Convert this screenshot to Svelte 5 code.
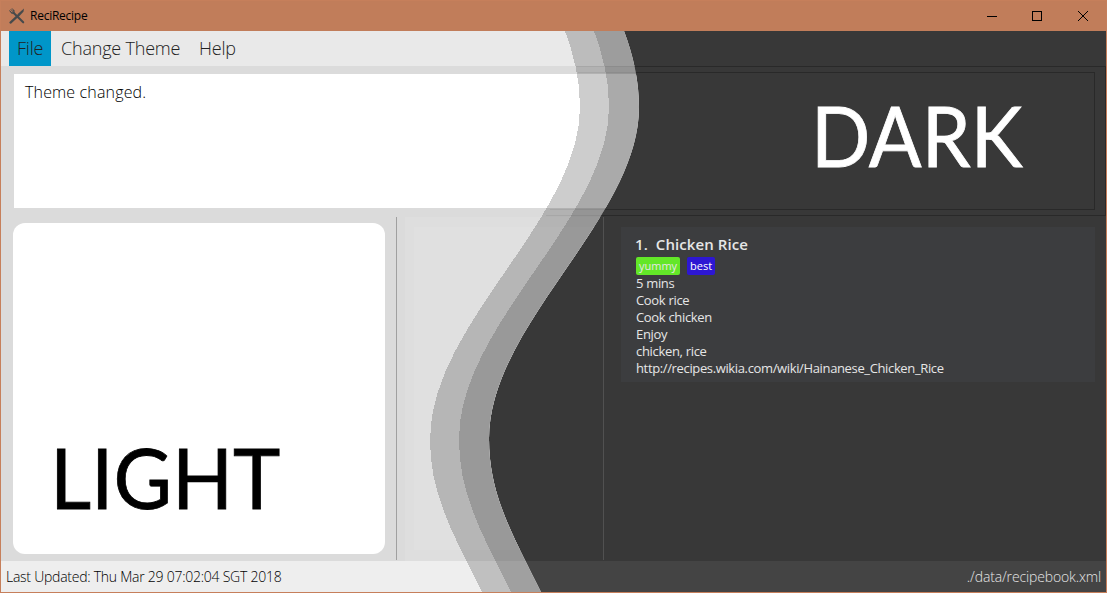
<script>
  const menus = ['File', 'Change Theme', 'Help'];
  const recipe = {
    title: '1.  Chicken Rice',
    tags: [
      { name: 'yummy', kind: 'green' },
      { name: 'best', kind: 'blue' }
    ],
    lines: ['5 mins', 'Cook rice', 'Cook chicken', 'Enjoy', 'chicken, rice'],
    url: 'http://recipes.wikia.com/wiki/Hainanese_Chicken_Rice'
  };
  // Wave outline running from the top of the content area to its bottom
  const wave = (dx) =>
    `M${623 + dx} 0C${632 + dx} 24 ${638 + dx} 49 ${638 + dx} 76C${638 + dx} 188 ${488 + dx} 293 ${488 + dx} 408C${488 + dx} 463 ${510 + dx} 501 ${540 + dx} 561`;
  const edge = `${wave(0)}L0 561L0 0Z`;
  const shade = (dx) => `${wave(dx)}L1105 561L1105 0Z`;
</script>

<div class="window">
  <header class="titlebar">
    <svg class="logo" width="16" height="16" viewBox="0 0 16 16">
      <path d="M15 .6L9.6 5.2L7.8 8L10 8.4L14.4 3.8Z" fill="#474a4b" />
      <path d="M9 7.6L1.5 14.6" stroke="#474a4b" stroke-width="2.2" stroke-linecap="round" />
      <path d="M.5 2.3L3 5M1.7 1.2L4.2 3.8M3 .4L5.4 3M1 3C2.2 5.8 3.6 5.8 5 5.2C5.6 4.4 5.2 3.2 4.2 2" fill="none" stroke="#474a4b" stroke-width="1" />
      <path d="M4.2 4.4L14.2 14.3" stroke="#474a4b" stroke-width="2.1" stroke-linecap="round" />
    </svg>
    <span class="app-name">ReciRecipe</span>
    <svg class="controls" width="106" height="12" viewBox="0 0 106 12" fill="none" stroke="#000">
      <path d="M1 6.5H11M46.5 1.5H55.5V10.5H46.5Z" shape-rendering="crispEdges" />
      <path d="M92 1L102 11M102 1L92 11" />
    </svg>
  </header>

  <main class="stage">
    <section class="layer dark">
      <div class="menubar"></div>
      <div class="result-pane"><div class="result"><span class="big dark-word">DARK</span></div></div>
      <div class="split">
        <div class="list-pane">
          <article class="recipe">
            <h1>{recipe.title}</h1>
            <div class="tags">
              {#each recipe.tags as tag}<span class="tag {tag.kind}">{tag.name}</span>{/each}
            </div>
            {#each recipe.lines as line}<p>{line}</p>{/each}
            <p class="url">{recipe.url}</p>
          </article>
        </div>
      </div>
      <footer><span class="path">./data/recipebook.xml</span></footer>
    </section>

    <section class="layer light" style:clip-path={`path("${edge}")`}>
      <nav class="menubar">
        {#each menus as menu, i}<span class="menu m{i}">{menu}</span>{/each}
      </nav>
      <div class="result-pane"><div class="result"><span class="message">Theme changed.</span></div></div>
      <div class="split">
        <div class="card-pane"><div class="card"><span class="big light-word">LIGHT</span></div></div>
        <div class="list-pane"><div class="list"></div></div>
      </div>
      <footer><span class="updated">Last Updated: Thu Mar 29 07:02:04 SGT 2018</span></footer>
      <svg class="bands" width="1105" height="561" viewBox="0 0 1105 561" shape-rendering="crispEdges">
        <path d={shade(-59)} fill="#383838" fill-opacity=".25" />
        <path d={shade(-30)} fill="#383838" fill-opacity=".23" />
        <path d="M575 35.5H640M577 41.5H640M549 178.5H640M545 184.5H640" stroke="#222" stroke-opacity=".07" />
      </svg>
    </section>
  </main>
</div>

<style>
  :global(body) { margin: 0; overflow: hidden; }
  .window {
    box-sizing: border-box;
    width: 1107px;
    height: 593px;
    border: 1px solid #c67f5b;
    background: #383838;
    font-family: "Open Sans", "Noto Sans", sans-serif;
  }
  .titlebar {
    display: flex;
    align-items: center;
    height: 30px;
    padding: 0 14px 0 8px;
    background: #c17d5a;
    color: #000;
  }
  .logo { display: block; }
  .app-name { margin-left: 5px; font: 12px/20px "Open Sans", sans-serif; letter-spacing: -0.25px; }
  .controls { display: block; margin: -1px 0 0 auto; }
  .stage { display: grid; height: 561px; }
  .layer {
    grid-area: 1 / 1;
    display: flex;
    flex-direction: column;
    min-width: 0;
    height: 561px;
    overflow: hidden;
  }
  .dark { background: #383838; color: #e6e6e6; }
  .light { background: #dbdbdb; color: #000; position: relative; }
  .menubar { display: flex; flex: 0 0 35px; padding-left: 8px; }
  .light .menubar { background: #e9e9e9; }
  .menu { box-sizing: border-box; font-size: 18px; font-weight: 300; line-height: 35px; letter-spacing: -0.2px; color: #222; white-space: nowrap; }
  .m0 { width: 42px; padding-left: 8px; background: #0096c9; }
  .m1 { width: 138px; padding-left: 10px; }
  .m2 { padding-left: 10px; }
  .result-pane { box-sizing: border-box; flex: 0 0 150px; }
  .dark .result-pane { border: 1px solid #292929; border-left: 0; padding: 5px 10px 5px 0; }
  .dark .result { box-sizing: border-box; height: 138px; border: 1px solid #292929; border-left: 0; display: flex; justify-content: flex-end; padding: 10px 72px 0 0; }
  .light .result-pane { padding: 8px 13px; }
  .light .result { height: 134px; background: #fff; padding-left: 11px; box-sizing: border-box; }
  .message { font-size: 16px; font-weight: 300; line-height: 36px; letter-spacing: 0.15px; display: block; }
  .big { font-family: Lato, sans-serif; font-size: 84px; line-height: 103px; white-space: nowrap; display: block; }
  .dark-word { color: #fff; transform: scaleX(.93); transform-origin: right; -webkit-text-stroke: 0.8px #fff; }
  .light-word { transform: scaleX(.953); transform-origin: left; -webkit-text-stroke: 0.8px #000; }
  .split { display: flex; flex: 0 0 345px; box-sizing: border-box; padding-top: 1px; }
  .dark .split { padding-left: 602px; }
  .dark .list-pane { flex: 1; height: 343px; border-left: 1px solid #515151; padding: 10px 11px 0 17px; box-sizing: border-box; }
  .recipe { height: 155px; box-sizing: border-box; background: #3c3d3f; padding: 7px 15px 0; }
  .recipe h1 { margin: 0 0 0 -1px; font-size: 15px; font-weight: 600; line-height: 20px; white-space: pre; letter-spacing: 0.08px; }
  .tags { display: flex; gap: 7px; margin: 3px 0 1px; height: 17px; }
  .tag { height: 18px; box-sizing: border-box; padding: 0 3px; border-radius: 2px; font-size: 11px; line-height: 17px; }
  .green { background: #63e728; width: 44px; }
  .blue { background: #2d17d3; width: 28px; color: #fff; }
  .recipe p { margin: 0; font-size: 13px; line-height: 17px; letter-spacing: -0.32px; white-space: nowrap; }
  .recipe .url { letter-spacing: -0.36px; }
  .card-pane { box-sizing: border-box; width: 396px; height: 343px; padding: 6px 11px 6px 12px; border-right: 1px solid #a0a0a0; }
  .card { box-sizing: border-box; height: 331px; border-radius: 12px; background: #fff; padding: 202px 0 0 37px; }
  .light .list-pane { box-sizing: border-box; flex: 1; padding: 10px; padding-left: 17px; background: linear-gradient(90deg, #dbdbdb 8px, #dedede 8px); }
  .list { height: 323px; background: #e0e0e0; }
  footer { display: flex; flex: 0 0 31px; font-size: 14px; font-weight: 300; line-height: 31px; padding: 0 5px; }
  .dark footer { background: #444; justify-content: flex-end; }
  .light footer { background: #eee; }
  .updated { letter-spacing: -0.25px; }
  .path { letter-spacing: -0.14px; }
  .bands { position: absolute; inset: 0; }
</style>
